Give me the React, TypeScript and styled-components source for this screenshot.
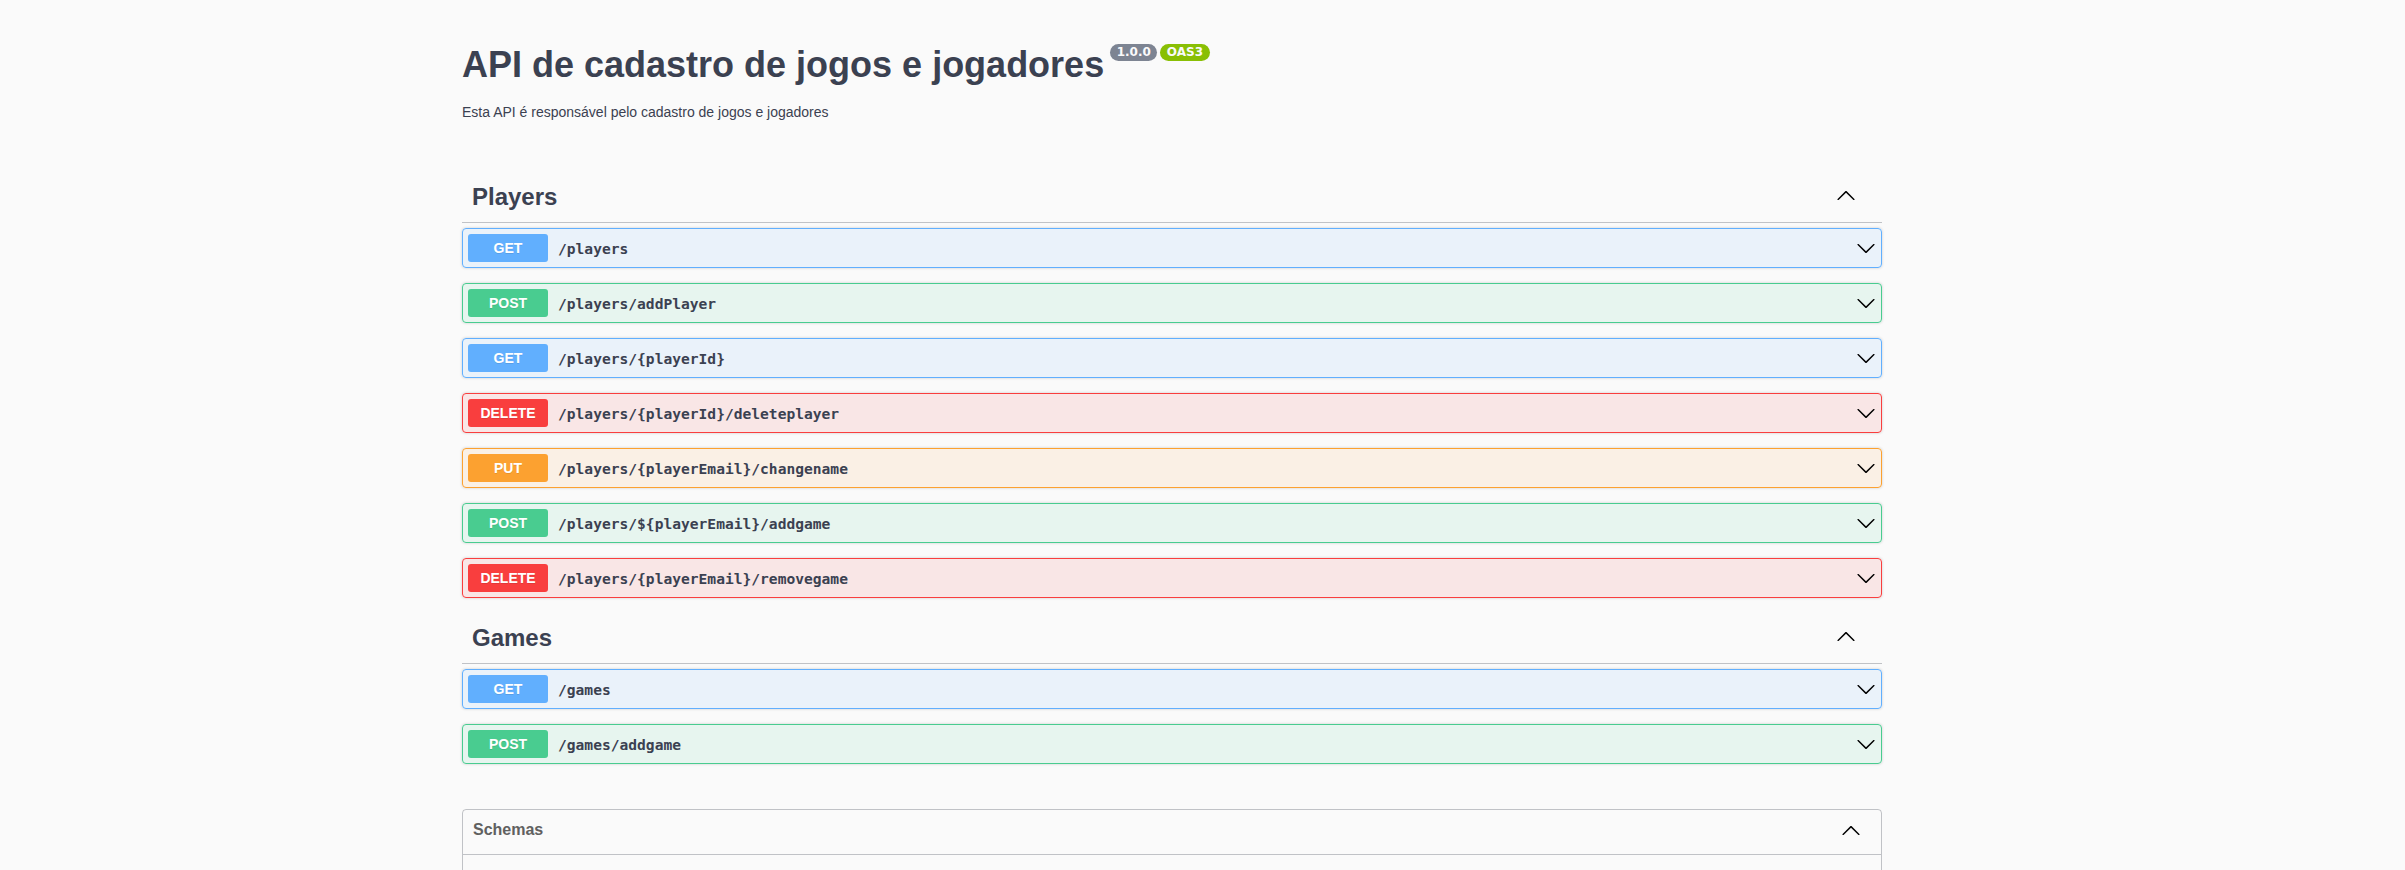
import React from "react";
import styled, { createGlobalStyle } from "styled-components";

const GlobalStyle = createGlobalStyle`
  html, body {
    margin: 0;
    padding: 0;
    background: #fafafa;
  }
  body {
    font-family: "Liberation Sans", Arial, sans-serif;
    color: #3b4151;
  }
  * { box-sizing: border-box; }
`;

type Method = "GET" | "POST" | "PUT" | "DELETE";

const methodColors: Record<Method, { main: string; bg: string }> = {
  GET: { main: "#61affe", bg: "rgba(97,175,254,.1)" },
  POST: { main: "#49cc90", bg: "rgba(73,204,144,.1)" },
  PUT: { main: "#fca130", bg: "rgba(252,161,48,.1)" },
  DELETE: { main: "#f93e3e", bg: "rgba(249,62,62,.1)" },
};

const Page = styled.div`
  width: 1420px;
  margin-left: 462px;
  padding-top: 44px;
`;

const InfoHeader = styled.div`
  display: flex;
  align-items: flex-start;
`;

const Title = styled.h2`
  margin: 0;
  font-size: 36px;
  line-height: 41px;
  font-weight: 700;
  color: #3b4151;
`;

const Stamp = styled.span<{ $variant: "version" | "oas" }>`
  display: inline-block;
  margin-left: ${(p) => (p.$variant === "version" ? "6px" : "3px")};
  padding: 2px 6.5px;
  border-radius: 57px;
  background: ${(p) => (p.$variant === "version" ? "#7d8492" : "#89bf04")};
  color: #fafafa;
  font-family: "DejaVu Sans", Verdana, sans-serif;
  font-size: 12px;
  line-height: 12.5px;
  font-weight: 700;
`;

const Description = styled.p`
  margin: 19px 0 0;
  font-size: 14px;
  line-height: 16px;
  color: #3b4151;
`;

const Sections = styled.div`
  margin-top: 52px;
`;

const TagSection = styled.section`
  display: flex;
  flex-direction: column;
`;

const TagHeader = styled.h3`
  display: flex;
  align-items: center;
  margin: 0 0 5px;
  padding: 10px 20px 10px 10px;
  font-size: 24px;
  line-height: 30px;
  font-weight: 700;
  color: #3b4151;
  border-bottom: 1px solid rgba(59, 65, 81, 0.3);
`;

const TagName = styled.span`
  flex: 1;
`;

const Chevron = styled.svg<{ $shift?: number; $right?: number }>`
  width: 20px;
  height: 20px;
  flex: none;
  fill: #000;
  margin-right: ${(p) => p.$right ?? 0}px;
  margin-bottom: ${(p) => p.$shift ?? 0}px;
`;

const OpBlock = styled.div<{ $method: Method }>`
  margin: 0 0 15px;
  border: 1px solid ${(p) => methodColors[p.$method].main};
  border-radius: 4px;
  background: ${(p) => methodColors[p.$method].bg};
  box-shadow: 0 0 3px rgba(0, 0, 0, 0.19);
`;

const Summary = styled.div`
  display: flex;
  align-items: center;
  padding: 5px;
`;

const MethodBadge = styled.span<{ $method: Method }>`
  min-width: 80px;
  padding: 6px 0;
  border-radius: 3px;
  background: ${(p) => methodColors[p.$method].main};
  color: #fff;
  font-size: 14px;
  line-height: 16px;
  font-weight: 700;
  text-align: center;
  text-shadow: 0 1px 0 rgba(0, 0, 0, 0.1);
`;

const Path = styled.span`
  flex: 1;
  padding: 0 10px;
  font-family: "DejaVu Sans Mono", "Liberation Mono", monospace;
  font-size: 14.6px;
  font-weight: 700;
  color: #3b4151;
`;

const Models = styled.section`
  margin: 30px 0 0;
  border: 1px solid rgba(59, 65, 81, 0.3);
  border-radius: 4px;
`;

const ModelsHeader = styled.h4`
  display: flex;
  align-items: center;
  margin: 0;
  padding: 10px 20px 14px 10px;
  font-size: 16px;
  line-height: 20px;
  font-weight: 700;
  color: #606060;
  border-bottom: 1px solid rgba(59, 65, 81, 0.3);
`;

const ModelsBody = styled.div`
  height: 80px;
`;

const UP_PATH =
  "M17.418 14.908c.272.268.709.268.979 0s.271-.701 0-.969l-7.908-7.83c-.27-.268-.707-.268-.979 0l-7.908 7.83c-.27.268-.27.701 0 .969.271.268.709.268.979 0L10 7.767l7.418 7.141z";
const DOWN_PATH =
  "M17.418 6.109c.272-.268.709-.268.979 0s.271.701 0 .969l-7.908 7.83c-.27.268-.707.268-.979 0l-7.908-7.83c-.27-.268-.27-.701 0-.969.271-.268.709-.268.979 0L10 13.25l7.418-7.141z";

const ArrowUp = ({ shift, right }: { shift?: number; right?: number }) => (
  <Chevron viewBox="0 0 20 20" $shift={shift} $right={right}>
    <path d={UP_PATH} />
  </Chevron>
);

const ArrowDown = () => (
  <Chevron viewBox="0 0 20 20">
    <path d={DOWN_PATH} />
  </Chevron>
);

type Op = { method: Method; path: string };

const tags: { name: string; ops: Op[] }[] = [
  {
    name: "Players",
    ops: [
      { method: "GET", path: "/players" },
      { method: "POST", path: "/players/addPlayer" },
      { method: "GET", path: "/players/{playerId}" },
      { method: "DELETE", path: "/players/{playerId}/deleteplayer" },
      { method: "PUT", path: "/players/{playerEmail}/changename" },
      { method: "POST", path: "/players/${playerEmail}/addgame" },
      { method: "DELETE", path: "/players/{playerEmail}/removegame" },
    ],
  },
  {
    name: "Games",
    ops: [
      { method: "GET", path: "/games" },
      { method: "POST", path: "/games/addgame" },
    ],
  },
];

export default function App() {
  return (
    <>
      <GlobalStyle />
      <Page>
        <InfoHeader>
          <Title>API de cadastro de jogos e jogadores</Title>
          <Stamp $variant="version">1.0.0</Stamp>
          <Stamp $variant="oas">OAS3</Stamp>
        </InfoHeader>
        <Description>
          Esta API é responsável pelo cadastro de jogos e jogadores
        </Description>
        <Sections>
          {tags.map((tag) => (
            <TagSection key={tag.name}>
              <TagHeader>
                <TagName>{tag.name}</TagName>
                <ArrowUp shift={4} right={6} />
              </TagHeader>
              {tag.ops.map((op, i) => (
                <OpBlock key={i} $method={op.method}>
                  <Summary>
                    <MethodBadge $method={op.method}>{op.method}</MethodBadge>
                    <Path>{op.path}</Path>
                    <ArrowDown />
                  </Summary>
                </OpBlock>
              ))}
            </TagSection>
          ))}
          <Models>
            <ModelsHeader>
              <TagName>Schemas</TagName>
              <ArrowUp />
            </ModelsHeader>
            <ModelsBody />
          </Models>
        </Sections>
      </Page>
    </>
  );
}
